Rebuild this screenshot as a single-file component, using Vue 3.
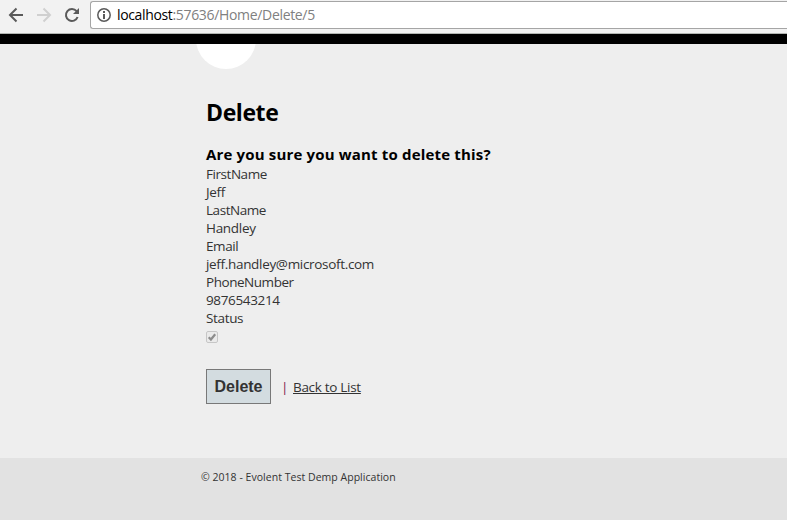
<script setup>
const fields = [
  { label: 'FirstName', value: 'Jeff', ls: -0.45, vs: -0.35 },
  { label: 'LastName', value: 'Handley', ls: -0.45, vs: -0.3 },
  { label: 'Email', value: 'jeff.handley@microsoft.com', ls: -0.4, vs: -0.32 },
  { label: 'PhoneNumber', value: '9876543214', ls: -0.46, vs: -0.35 },
]
</script>

<template>
  <div class="window">
    <header class="toolbar">
      <svg class="nav" width="90" height="33" viewBox="0 0 90 33" fill="none" stroke-width="2">
        <path d="M23 15H10M16.500 8.500L10 15L16.500 21.500" stroke="#5a5a5a" />
        <path d="M37 15H50M43.500 8.500L50 15L43.500 21.500" stroke="#d0d0d0" />
        <path d="M76.600 11.200A6 6 0 1 0 77.600 17" stroke="#5a5a5a" />
        <path d="M79 8V14H73Z" fill="#5a5a5a" />
      </svg>
      <div class="address">
        <svg class="info" width="14" height="14" viewBox="0 0 14 14">
          <circle cx="7" cy="7" r="6.200" fill="none" stroke="#5a5a5a" stroke-width="1.500" />
          <path d="M6 3H8V5H6ZM6 6H8V11H6Z" fill="#5a5a5a" />
        </svg>
        <span class="url"><span class="host">localhost</span><span class="path">:57636/Home/Delete/5</span></span>
      </div>
    </header>
    <div class="band"></div>
    <main class="body">
      <div class="circle"></div>
      <h2>Delete</h2>
      <h3><span>Are you sure you want to delete this?</span></h3>
      <dl>
        <template v-for="f in fields" :key="f.label">
          <dt><span :style="{ letterSpacing: f.ls + 'px' }">{{ f.label }}</span></dt>
          <dd><span :style="{ letterSpacing: f.vs + 'px' }">{{ f.value }}</span></dd>
        </template>
        <dt><span class="status">Status</span></dt>
        <dd class="check">
          <svg width="12" height="12" viewBox="0 0 12 12">
            <rect x=".5" y=".5" width="11" height="11" rx="1.500" fill="#eaeaea" stroke="#c6c6c6" />
            <path d="M2.700 6.300L4.900 8.500L9.200 3.200" fill="none" stroke="#8c8c8c" stroke-width="2.200" />
          </svg>
        </dd>
      </dl>
      <div class="actions">
        <button type="button">Delete</button>
        <span class="bar">|</span>
        <a href="#">Back to List</a>
      </div>
    </main>
    <footer><span>© 2018 - Evolent Test Demp Application</span></footer>
  </div>
</template>

<style>
body { margin: 0; overflow: hidden; }
</style>

<style scoped>
.window {
  height: 520px;
  display: flex;
  flex-direction: column;
  overflow: hidden;
  background: #eee;
  color: #333;
  font-family: "Open Sans", "Noto Sans", sans-serif;
  font-size: 13.500px;
  white-space: nowrap;
}
.toolbar {
  height: 34px;
  box-sizing: border-box;
  display: flex;
  background: #f2f2f2;
  border-bottom: 1px solid #b3b6b3;
}
.nav { flex: none; }
.address {
  flex: 1;
  box-sizing: border-box;
  height: 28px;
  margin-top: 1px;
  padding-left: 6px;
  display: flex;
  align-items: center;
  background: #fff;
  border: 1px solid #a5a5a5;
  border-right: 0;
  border-radius: 3px 0 0 3px;
}
.info { margin-right: 6px; }
.url { font-size: 14px; line-height: 20px; }
.host { color: #000; letter-spacing: -0.35px; }
.path { color: #808080; letter-spacing: -0.33px; }
.band { height: 10px; background: #000; }
.body {
  position: relative;
  box-sizing: border-box;
  height: 414px;
  padding: 52px 0 0 206px;
  overflow: hidden;
}
.circle {
  position: absolute;
  left: 196px;
  top: -35px;
  width: 60px;
  height: 60px;
  border-radius: 50%;
  background: #fff;
}
h2 {
  margin: 0;
  color: #000;
  font-size: 23px;
  line-height: 32px;
  font-weight: 700;
  letter-spacing: -0.4px;
}
h3 {
  margin: 16px 0 1px;
  color: #000;
  font-size: 15px;
  line-height: 20px;
  font-weight: 700;
  letter-spacing: 0.17px;
}
dl { margin: 0; line-height: 18px; }
dt, dd { margin: 0; height: 18px; }
.status { letter-spacing: -0.35px; }
.check { display: flex; align-items: center; height: 20px; }
.actions { display: flex; align-items: center; margin-top: 22px; height: 35px; }
button {
  width: 65px;
  height: 35px;
  padding: 0;
  border: 1px solid #787878;
  border-radius: 0;
  background: #d3dce0;
  color: #333;
  font: 700 16px "Liberation Sans", Arial, sans-serif;
}
.bar { width: 11px; margin-left: 10px; color: #7d1a4a; }
a { margin-left: 1px; color: #333; text-decoration: underline; letter-spacing: -0.3px; }
footer {
  flex: 1;
  padding: 10px 0 0 201px;
  background: #e2e2e2;
  font-size: 10.500px;
  letter-spacing: 0.03px;
  line-height: 18px;
}
</style>
